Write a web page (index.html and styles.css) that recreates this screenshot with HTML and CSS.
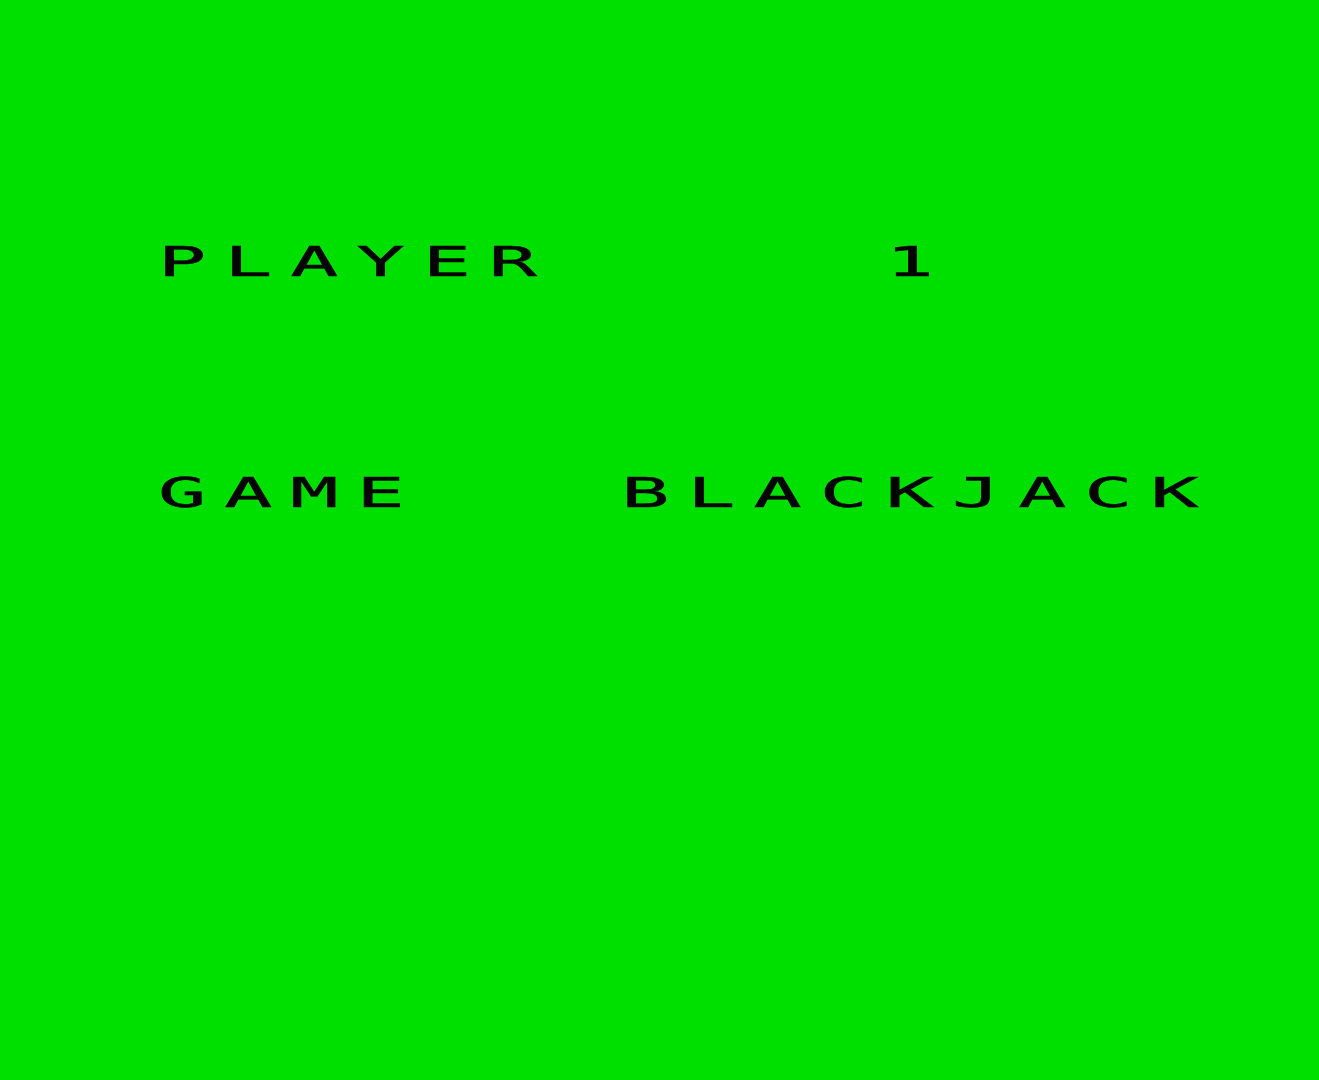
FILE: index.html
```html
<!DOCTYPE html>
<html lang="en">
<head>
    <meta charset="UTF-8">
    <title>Blackjack</title>
    <link rel="stylesheet" href="styles.css">
</head>
<body>
    <div class="screen">
        <div class="row">PLAYER     1</div>
        <div class="row">GAME   BLACKJACK</div>
    </div>
</body>
</html>
```

FILE: styles.css
```css
html, body {
    margin: 0;
    height: 100%;
}

body {
    background: #00e000;
    color: #050505;
    font-family: "DejaVu Sans Mono", "Liberation Mono", monospace;
    overflow: hidden;
}

.screen {
    padding: 242px 0 0 158px;
    display: flex;
    flex-direction: column;
    align-items: flex-start;
    gap: 191px;
}

/* chunky stretched characters on a fixed cell grid */
.row {
    font-size: 40px;
    line-height: 40px;
    letter-spacing: 9px;
    white-space: pre;
    -webkit-text-stroke: 0.45px #050505;
    transform: scaleX(2);
    transform-origin: left top;
}
```
